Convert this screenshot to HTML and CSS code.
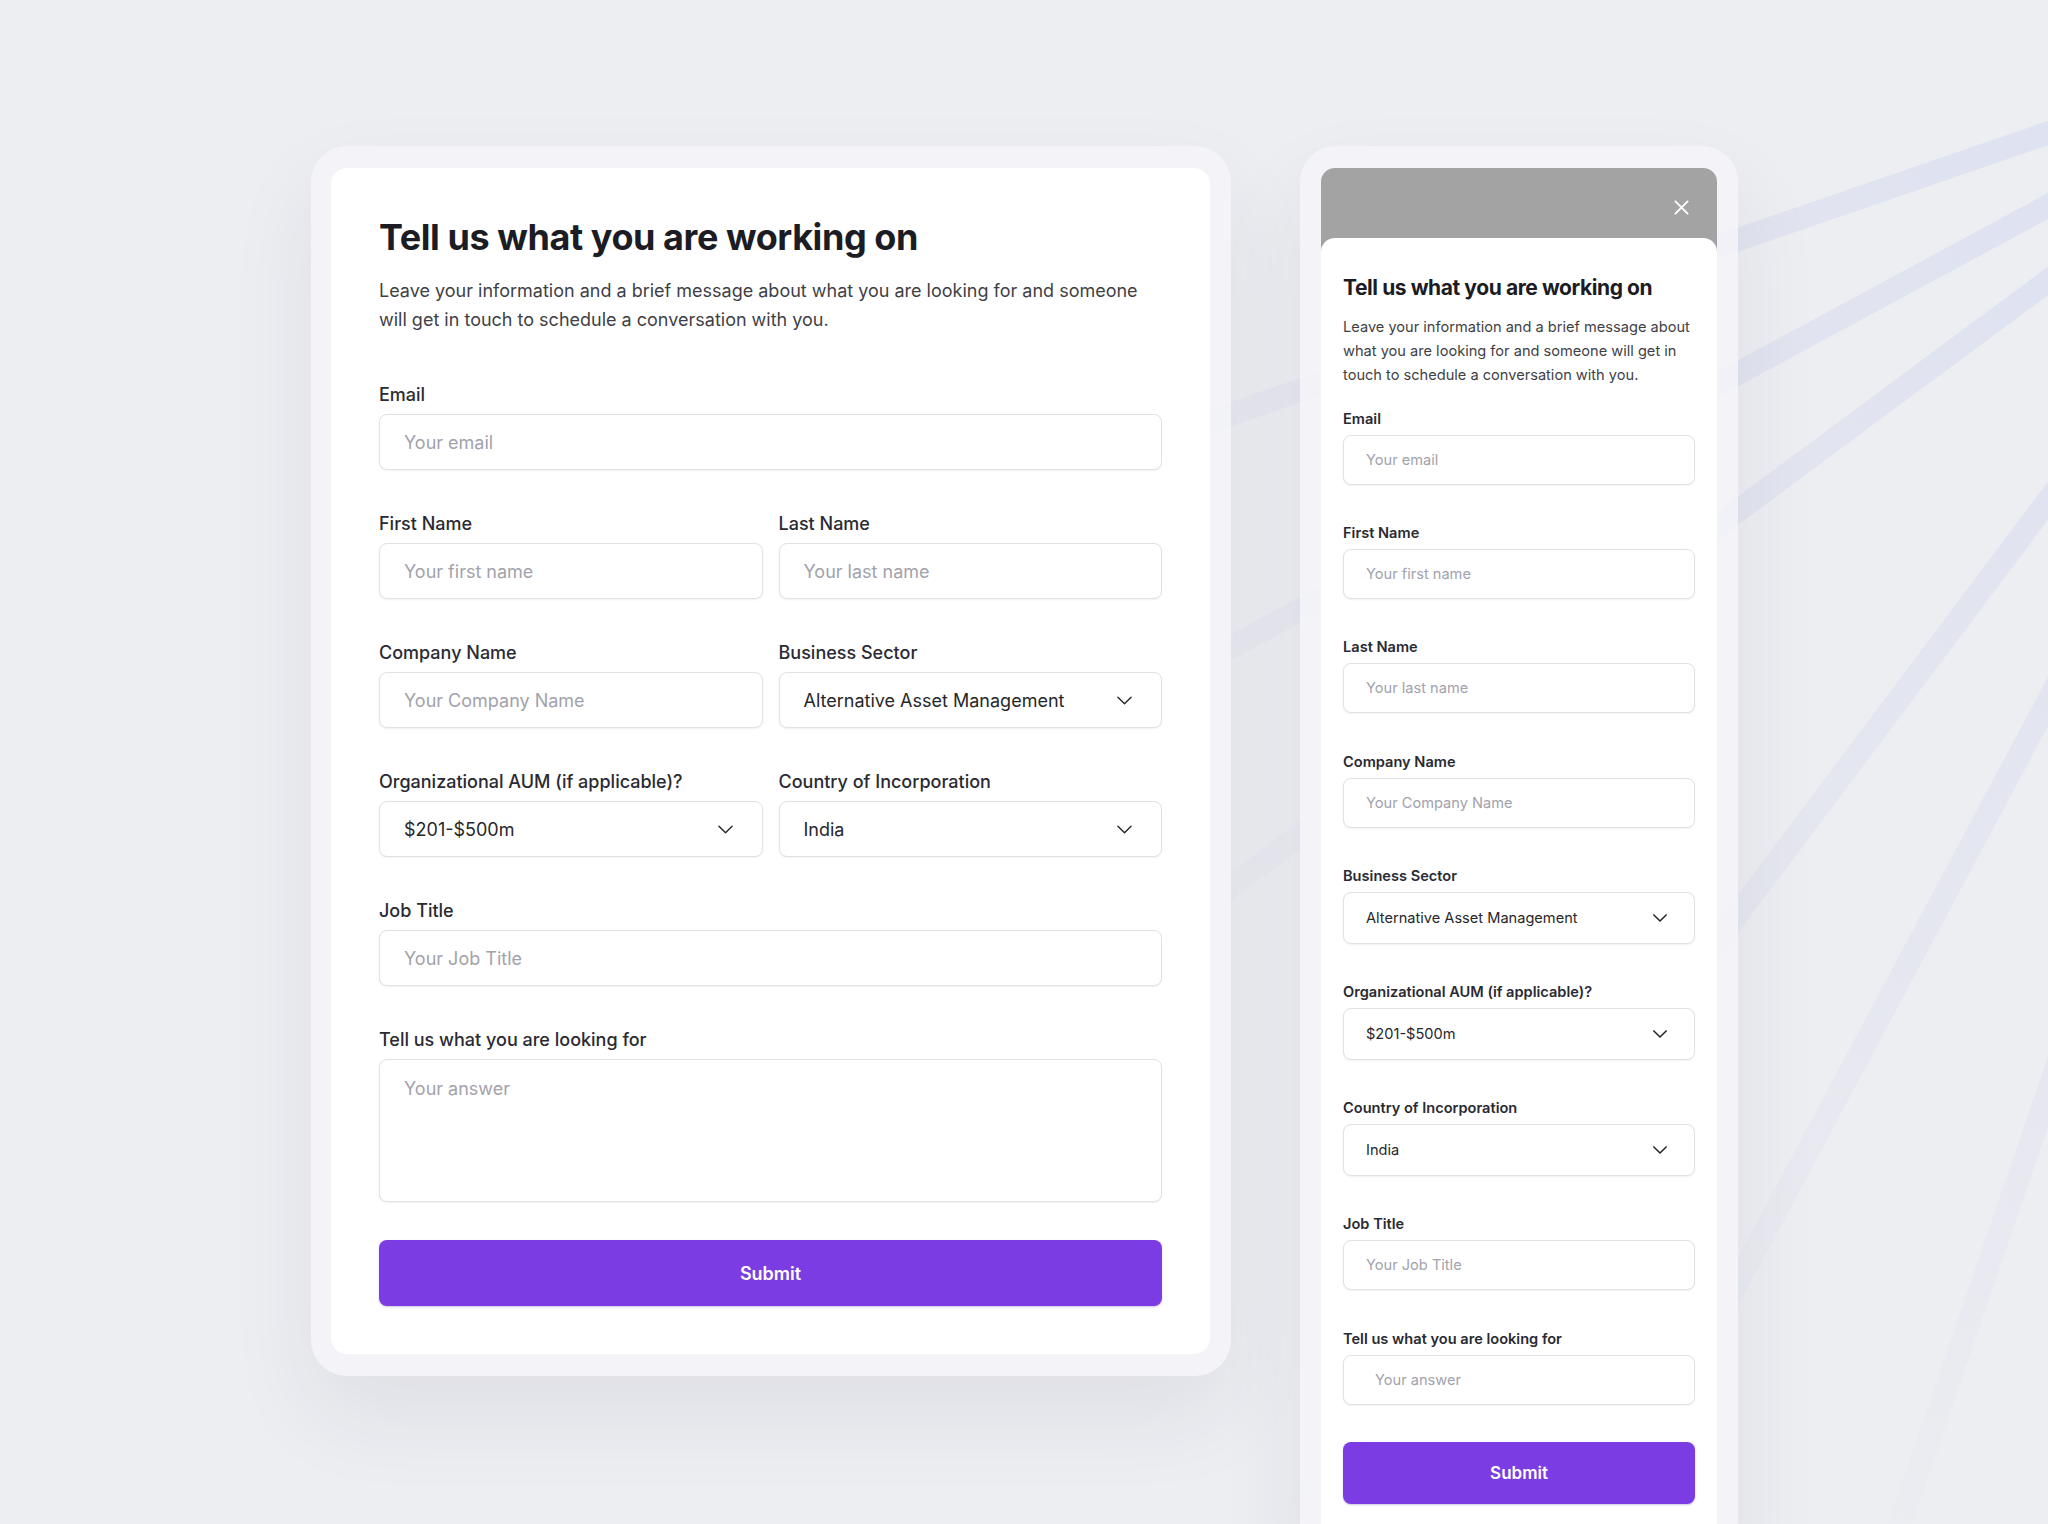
FILE: index.html
```html
<!DOCTYPE html>
<html lang="en">
<head>
<meta charset="utf-8">
<title>Tell us what you are working on</title>
<link rel="stylesheet" href="styles.css">
</head>
<body>
<svg class="rays" viewBox="0 0 2048 1524" aria-hidden="true">
  <defs>
    <radialGradient id="rayfade" gradientUnits="userSpaceOnUse" cx="2420" cy="5" r="1900">
      <stop offset="0" stop-color="#dfe2f0" stop-opacity="1"/>
      <stop offset="0.25" stop-color="#dfe2f0" stop-opacity="1"/>
      <stop offset="0.6" stop-color="#e1e3ef" stop-opacity="0.6"/>
      <stop offset="0.85" stop-color="#e3e5ef" stop-opacity="0.15"/>
      <stop offset="1" stop-color="#e3e5ef" stop-opacity="0"/>
    </radialGradient>
  </defs>
  <g stroke="url(#rayfade)" stroke-width="23" fill="none">
    <line x1="2420" y1="5" x2="900" y2="528"/>
    <line x1="2420" y1="5" x2="900" y2="826"/>
    <line x1="2420" y1="5" x2="900" y2="1132"/>
    <line x1="2420" y1="5" x2="1180" y2="1657"/>
    <line x1="2420" y1="5" x2="1520" y2="1690"/>
    <line x1="2420" y1="5" x2="1850" y2="1670"/>
  </g>
</svg>

<main class="stage">
  <section class="frame frame-desktop">
    <div class="card">
      <h1 class="title">Tell us what you are working on</h1>
      <p class="lead">Leave your information and a brief message about what you are looking for and someone<br>will get in touch to schedule a conversation with you.</p>
      <form class="form">
        <div class="fields">
          <div class="field span2">
            <label class="label">Email</label>
            <input class="input" type="text" placeholder="Your email">
          </div>
          <div class="field">
            <label class="label">First Name</label>
            <input class="input" type="text" placeholder="Your first name">
          </div>
          <div class="field">
            <label class="label">Last Name</label>
            <input class="input" type="text" placeholder="Your last name">
          </div>
          <div class="field">
            <label class="label">Company Name</label>
            <input class="input" type="text" placeholder="Your Company Name">
          </div>
          <div class="field">
            <label class="label">Business Sector</label>
            <div class="input select"><span>Alternative Asset Management</span><svg class="chev" viewBox="0 0 16 9"><path d="M1 1l7 7 7-7"/></svg></div>
          </div>
          <div class="field">
            <label class="label">Organizational AUM (if applicable)?</label>
            <div class="input select"><span>$201-$500m</span><svg class="chev" viewBox="0 0 16 9"><path d="M1 1l7 7 7-7"/></svg></div>
          </div>
          <div class="field">
            <label class="label">Country of Incorporation</label>
            <div class="input select"><span>India</span><svg class="chev" viewBox="0 0 16 9"><path d="M1 1l7 7 7-7"/></svg></div>
          </div>
          <div class="field span2">
            <label class="label">Job Title</label>
            <input class="input" type="text" placeholder="Your Job Title">
          </div>
          <div class="field span2">
            <label class="label">Tell us what you are looking for</label>
            <textarea class="input textarea" placeholder="Your answer"></textarea>
          </div>
        </div>
        <button class="submit" type="button">Submit</button>
      </form>
    </div>
  </section>

  <section class="frame frame-mobile">
    <div class="sheet">
      <div class="sheet-head">
        <svg class="close" viewBox="0 0 16 16" aria-label="Close"><path d="M1.5 1.5l13 13M14.5 1.5l-13 13"/></svg>
      </div>
      <div class="sheet-body">
        <h2 class="m-title">Tell us what you are working on</h2>
        <p class="m-lead">Leave your information and a brief message about<br>what you are looking for and someone will get in<br>touch to schedule a conversation with you.</p>
        <form class="m-form">
          <div class="m-field">
            <label class="m-label">Email</label>
            <input class="m-input" type="text" placeholder="Your email">
          </div>
          <div class="m-field">
            <label class="m-label">First Name</label>
            <input class="m-input" type="text" placeholder="Your first name">
          </div>
          <div class="m-field">
            <label class="m-label">Last Name</label>
            <input class="m-input" type="text" placeholder="Your last name">
          </div>
          <div class="m-field">
            <label class="m-label">Company Name</label>
            <input class="m-input" type="text" placeholder="Your Company Name">
          </div>
          <div class="m-field">
            <label class="m-label">Business Sector</label>
            <div class="m-input m-select"><span>Alternative Asset Management</span><svg class="m-chev" viewBox="0 0 16 9"><path d="M1 1l7 7 7-7"/></svg></div>
          </div>
          <div class="m-field">
            <label class="m-label">Organizational AUM (if applicable)?</label>
            <div class="m-input m-select"><span>$201-$500m</span><svg class="m-chev" viewBox="0 0 16 9"><path d="M1 1l7 7 7-7"/></svg></div>
          </div>
          <div class="m-field">
            <label class="m-label">Country of Incorporation</label>
            <div class="m-input m-select"><span>India</span><svg class="m-chev" viewBox="0 0 16 9"><path d="M1 1l7 7 7-7"/></svg></div>
          </div>
          <div class="m-field">
            <label class="m-label">Job Title</label>
            <input class="m-input" type="text" placeholder="Your Job Title">
          </div>
          <div class="m-field">
            <label class="m-label">Tell us what you are looking for</label>
            <input class="m-input m-answer" type="text" placeholder="Your answer">
          </div>
          <button class="m-submit" type="button">Submit</button>
        </form>
      </div>
    </div>
  </section>
</main>
</body>
</html>
```

FILE: styles.css
```css
* { box-sizing: border-box; }

html, body {
  margin: 0;
  padding: 0;
}

body {
  width: 2048px;
  height: 1524px;
  overflow: hidden;
  position: relative;
  background: #edeef2;
  font-family: Inter, "Noto Sans", "Liberation Sans", sans-serif;
  color: #27272a;
}

.rays {
  position: absolute;
  left: 0;
  top: 0;
  width: 2048px;
  height: 1524px;
  z-index: 0;
}

.stage {
  position: relative;
  z-index: 1;
  display: flex;
  align-items: flex-start;
  gap: 69px;
  padding: 146px 0 0 311px;
}

.frame {
  background: rgba(245, 246, 249, 0.75);
  border-radius: 36px;
  box-shadow: 0 40px 90px rgba(40, 40, 70, 0.07);
}

/* ---------- desktop card ---------- */
.frame-desktop {
  width: 920px;
  padding: 22px 21px 22px 20px;
}

.card {
  background: #ffffff;
  border-radius: 16px;
  padding: 47px 48px 48px 48px;
}

.title {
  margin: 0;
  font-size: 36px;
  line-height: 44px;
  font-weight: 700;
  letter-spacing: -0.012em;
  color: #1c1c24;
}

.lead {
  margin: 17px 0 0;
  font-size: 18px;
  line-height: 29px;
  color: #3f3f46;
  white-space: nowrap;
}

.form {
  margin: 49px 0 0;
}

.fields {
  display: grid;
  grid-template-columns: 1fr 1fr;
  column-gap: 16px;
  row-gap: 42px;
}

.span2 { grid-column: 1 / -1; }

.label {
  display: block;
  font-size: 18px;
  line-height: 24px;
  font-weight: 500;
  color: #2a2a33;
  margin-bottom: 7px;
}

.input {
  display: flex;
  align-items: center;
  width: 100%;
  height: 56px;
  margin: 0;
  padding: 0 24px;
  border: 1.5px solid #e1e1e6;
  border-radius: 8px;
  background: #ffffff;
  box-shadow: 0 1px 2px rgba(20, 20, 40, 0.06);
  font-family: inherit;
  font-size: 18px;
  color: #27272a;
  outline: none;
}

.input::placeholder { color: #a2a2ac; opacity: 1; }

.select {
  justify-content: space-between;
  padding-right: 29px;
}

.chev {
  width: 15px;
  height: 9px;
  fill: none;
  stroke: #27272a;
  stroke-width: 1.5;
  stroke-linecap: round;
  stroke-linejoin: round;
}

.textarea {
  display: block;
  height: 143px;
  padding: 17px 24px;
  line-height: 24px;
  resize: none;
}

.submit {
  display: block;
  width: 100%;
  height: 66px;
  margin-top: 38px;
  border: 0;
  border-radius: 8px;
  background: #7b3de3;
  color: #ffffff;
  font-family: inherit;
  font-size: 18px;
  font-weight: 600;
  box-shadow: 0 1px 2px rgba(60, 20, 140, 0.25);
}

/* ---------- mobile sheet ---------- */
.frame-mobile {
  width: 438px;
  height: 1420px;
  padding: 22px 21px 0 21px;
  border-radius: 36px 36px 0 0;
}

.sheet {
  height: 100%;
  display: flex;
  flex-direction: column;
  background: #a3a3a3;
  border-radius: 14px 14px 0 0;
  overflow: hidden;
}

.sheet-head {
  height: 70px;
  flex: none;
  display: flex;
  justify-content: flex-end;
  align-items: flex-start;
  padding: 32px 28px 0 0;
}

.close {
  width: 15px;
  height: 15px;
  fill: none;
  stroke: #ffffff;
  stroke-width: 2;
  stroke-linecap: round;
}

.sheet-body {
  flex: 1;
  background: #ffffff;
  border-radius: 14px 14px 0 0;
  padding: 36px 22px 0 22px;
}

.m-title {
  margin: 0;
  font-size: 21px;
  line-height: 28px;
  font-weight: 700;
  letter-spacing: -0.02em;
  color: #1c1c24;
}

.m-lead {
  margin: 13px 0 0;
  font-size: 14.6px;
  line-height: 24px;
  color: #3f3f46;
  white-space: nowrap;
}

.m-form {
  margin: 22px 0 0;
  display: flex;
  flex-direction: column;
  gap: 38.2px;
}

.m-label {
  display: block;
  font-size: 14.6px;
  line-height: 20px;
  font-weight: 600;
  color: #2a2a33;
  margin-bottom: 6px;
}

.m-input {
  display: flex;
  align-items: center;
  width: 100%;
  height: 50px;
  margin: 0;
  padding: 0 22px;
  border: 1.5px solid #e1e1e6;
  border-radius: 8px;
  background: #ffffff;
  box-shadow: 0 1px 2px rgba(20, 20, 40, 0.06);
  font-family: inherit;
  font-size: 14.6px;
  color: #27272a;
  outline: none;
}

.m-input::placeholder { color: #a2a2ac; opacity: 1; }

.m-select {
  height: 52px;
  justify-content: space-between;
  padding-right: 27px;
}

.m-answer { padding-left: 31px; }

.m-chev {
  width: 14px;
  height: 8px;
  fill: none;
  stroke: #27272a;
  stroke-width: 1.8;
  stroke-linecap: round;
  stroke-linejoin: round;
}

.m-submit {
  display: block;
  width: 100%;
  height: 62px;
  margin-top: -1px;
  border: 0;
  border-radius: 8px;
  background: #7b3de3;
  color: #ffffff;
  font-family: inherit;
  font-size: 17px;
  font-weight: 600;
  box-shadow: 0 1px 2px rgba(60, 20, 140, 0.25);
}
```
